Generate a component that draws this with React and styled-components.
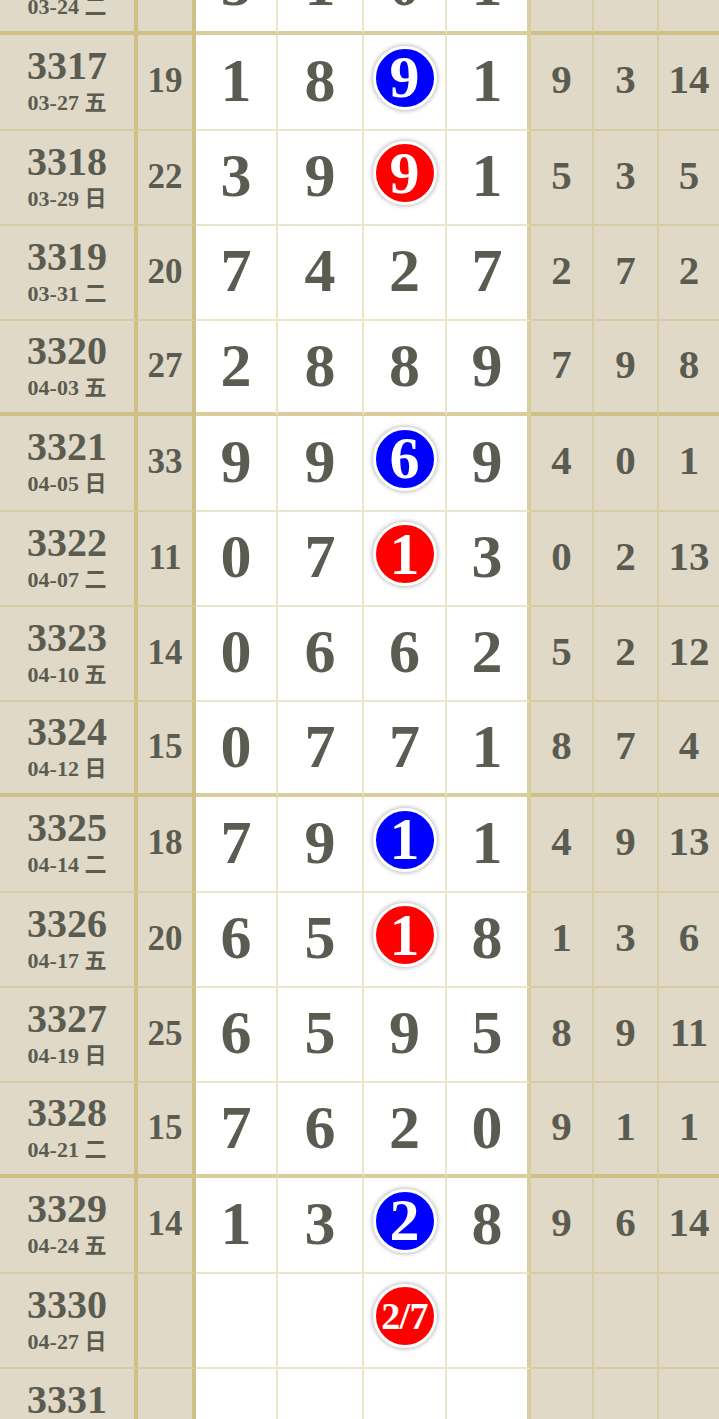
import React from 'react';
import styled, { createGlobalStyle } from 'styled-components';

const GlobalStyle = createGlobalStyle`
  html, body { margin: 0; padding: 0; background: #ffffff; }
  body { overflow: hidden; }
`;

const INK = '#5b5c51';
const TAN = '#e1d9c8';
const LINE_THIN = 'rgba(196, 180, 100, 0.34)';
const LINE_THICK = 'rgba(196, 180, 100, 0.64)';

const Table = styled.div`
  display: flex;
  flex-direction: column;
  width: 719px;
  margin-top: -60px;
  font-family: "Liberation Serif", "Noto Sans CJK SC", serif;
  font-weight: 700;
  color: ${INK};
`;

const Row = styled.div`
  display: grid;
  grid-template-columns: 138px 58px 82px 86px 83px 84px 63px 65px 60px;
  height: 95.25px;
`;

const Cell = styled.div`
  box-sizing: border-box;
  display: flex;
  align-items: center;
  justify-content: center;
  padding-bottom: 4px;
  background: ${(p) => (p.$white ? '#ffffff' : TAN)};
  border-bottom: ${(p) => (p.$thickBottom ? `4px solid ${LINE_THICK}` : `2px solid ${LINE_THIN}`)};
  border-right: ${(p) =>
    p.$edge === 'thick' ? `4px solid ${LINE_THICK}` : p.$edge === 'none' ? '0' : `2px solid ${LINE_THIN}`};
  overflow: hidden;
`;

const Period = styled.div`
  display: flex;
  flex-direction: column;
  align-items: center;
  margin-top: 4px;
`;

const PeriodNo = styled.span`
  font-size: 40px;
  line-height: 36px;
`;

const PeriodDate = styled.span`
  font-size: 22px;
  line-height: 24px;
  margin-top: 7px;
  white-space: nowrap;
`;

const Sum = styled.span`
  font-size: 35px;
  line-height: 1;
  margin-bottom: -2px;
`;

const Digit = styled.span`
  font-size: 62px;
  line-height: 1;
`;

const Side = styled.span`
  font-size: 41px;
  line-height: 1;
`;

const Ball = styled.span`
  box-sizing: border-box;
  width: 64px;
  height: 64px;
  margin-bottom: 4px;
  border-radius: 50%;
  border: 3px solid #ffffff;
  background: ${(p) => (p.$color === 'blue' ? '#0000ff' : '#ff0000')};
  box-shadow: 0 0 4px 1px rgba(0, 0, 0, 0.28);
  display: flex;
  align-items: center;
  justify-content: center;
  color: #ffffff;
  font-size: ${(p) => (p.$small ? '38px' : '60px')};
  letter-spacing: ${(p) => (p.$small ? '-0.02em' : '0')};
  line-height: 1;
  padding-bottom: 1px;
`;

const rows = [
  { no: '3316', date: '03-24 二', sum: '7', d: ['5', '1', '0', '1'], side: ['1', '7', '1'] },
  { no: '3317', date: '03-27 五', sum: '19', d: ['1', '8', '9', '1'], ball: 'blue', side: ['9', '3', '14'] },
  { no: '3318', date: '03-29 日', sum: '22', d: ['3', '9', '9', '1'], ball: 'red', side: ['5', '3', '5'] },
  { no: '3319', date: '03-31 二', sum: '20', d: ['7', '4', '2', '7'], side: ['2', '7', '2'] },
  { no: '3320', date: '04-03 五', sum: '27', d: ['2', '8', '8', '9'], side: ['7', '9', '8'] },
  { no: '3321', date: '04-05 日', sum: '33', d: ['9', '9', '6', '9'], ball: 'blue', side: ['4', '0', '1'] },
  { no: '3322', date: '04-07 二', sum: '11', d: ['0', '7', '1', '3'], ball: 'red', side: ['0', '2', '13'] },
  { no: '3323', date: '04-10 五', sum: '14', d: ['0', '6', '6', '2'], side: ['5', '2', '12'] },
  { no: '3324', date: '04-12 日', sum: '15', d: ['0', '7', '7', '1'], side: ['8', '7', '4'] },
  { no: '3325', date: '04-14 二', sum: '18', d: ['7', '9', '1', '1'], ball: 'blue', side: ['4', '9', '13'] },
  { no: '3326', date: '04-17 五', sum: '20', d: ['6', '5', '1', '8'], ball: 'red', side: ['1', '3', '6'] },
  { no: '3327', date: '04-19 日', sum: '25', d: ['6', '5', '9', '5'], side: ['8', '9', '11'] },
  { no: '3328', date: '04-21 二', sum: '15', d: ['7', '6', '2', '0'], side: ['9', '1', '1'] },
  { no: '3329', date: '04-24 五', sum: '14', d: ['1', '3', '2', '8'], ball: 'blue', side: ['9', '6', '14'] },
  { no: '3330', date: '04-27 日', sum: '', d: ['', '', '2/7', ''], ball: 'red', small: true, side: ['', '', ''] },
  { no: '3331', date: '04-29 二', sum: '', d: ['', '', '', ''], side: ['', '', ''] },
];

export default function App() {
  return (
    <>
      <GlobalStyle />
      <Table>
        {rows.map((r, i) => {
          const thick = i % 4 === 0;
          return (
            <Row key={r.no}>
              <Cell $thickBottom={thick} $edge="thick">
                <Period>
                  <PeriodNo>{r.no}</PeriodNo>
                  <PeriodDate>{r.date}</PeriodDate>
                </Period>
              </Cell>
              <Cell $thickBottom={thick} $edge="thick">
                <Sum>{r.sum}</Sum>
              </Cell>
              {r.d.map((v, j) => (
                <Cell key={j} $white $thickBottom={thick} $edge={j === 3 ? 'thick' : 'thin'}>
                  {j === 2 && r.ball ? (
                    <Ball $color={r.ball} $small={r.small}>{v}</Ball>
                  ) : (
                    <Digit>{v}</Digit>
                  )}
                </Cell>
              ))}
              {r.side.map((v, j) => (
                <Cell key={`s${j}`} $thickBottom={thick} $edge={j === 2 ? 'none' : 'thin'}>
                  <Side>{v}</Side>
                </Cell>
              ))}
            </Row>
          );
        })}
      </Table>
    </>
  );
}
